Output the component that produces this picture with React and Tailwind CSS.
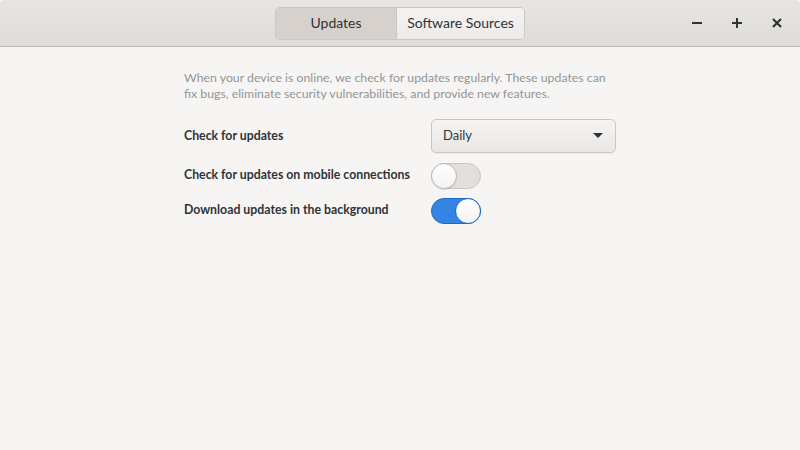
import React from "react";

export default function App() {
  const font = { fontFamily: 'Lato, "Noto Sans", sans-serif' };
  return (
    <div className="w-[800px] h-[450px] bg-white overflow-hidden" style={font}>
      <div className="w-full h-full bg-[#f6f5f4] rounded-t-[4px] overflow-hidden flex flex-col">
        <div className="h-[47px] shrink-0 bg-gradient-to-b from-[#e8e6e3] to-[#dedbd8] border-b border-[#bfb8b1] flex items-center relative">
          <div className="absolute left-[275px] top-[7px] flex h-[33px] w-[250px] rounded-[5px] border border-[#cdc7c2] overflow-hidden text-[14px] text-[#2e3436]">
            <div className="w-[121px] flex items-center justify-center pb-[2px] bg-[#d6d1cd] border-r border-[#cdc7c2]">Updates</div>
            <div className="flex-1 flex items-center justify-center pb-[2px] bg-gradient-to-b from-[#f4f3f2] to-[#edebe9]">Software Sources</div>
          </div>
          <div className="absolute right-0 top-0 h-[46px] flex items-center pb-[1px]">
            <div className="w-[40px] flex justify-center">
              <svg width="12" height="12" viewBox="0 0 12 12"><rect x="1" y="5" width="10" height="2" fill="#2e3436" /></svg>
            </div>
            <div className="w-[40px] flex justify-center">
              <svg width="12" height="12" viewBox="0 0 12 12"><rect x="1" y="5" width="10" height="2" fill="#2e3436" /><rect x="5" y="1" width="2" height="10" fill="#2e3436" /></svg>
            </div>
            <div className="w-[40px] flex justify-center mr-[3px]">
              <svg width="12" height="12" viewBox="0 0 12 12"><path d="M2 2 L10 10 M10 2 L2 10" stroke="#2e3436" strokeWidth="2.2" /></svg>
            </div>
          </div>
        </div>
        <div className="pl-[184px] pt-[23px] text-[#2e3436]">
          <p className="text-[12.3px] leading-[16px] text-[#929595] whitespace-nowrap">
            When your device is online, we check for updates regularly. These updates can
            <br />
            fix bugs, eliminate security vulnerabilities, and provide new features.
          </p>
          <div className="mt-[17px] flex items-center h-[34px]">
            <div className="w-[247px] text-[12.3px] font-bold whitespace-nowrap">Check for updates</div>
            <div className="w-[185px] h-[34px] rounded-[5px] border border-[#cdc7c2] bg-gradient-to-b from-[#f4f3f2] to-[#eae8e6] flex items-center justify-between px-[11px] text-[13px] shadow-[0_1px_0_rgba(0,0,0,0.05)]">
              <span>Daily</span>
              <svg width="12" height="8" viewBox="0 0 12 8"><path d="M1 1 L11 1 L6 6 Z" fill="#2e3436" /></svg>
            </div>
          </div>
          <div className="mt-[9px] flex items-center h-[27px]">
            <div className="w-[247px] text-[12.3px] font-bold whitespace-nowrap">Check for updates on mobile connections</div>
            <div className="w-[50px] h-[26px] rounded-full bg-[#e1dedb] border border-[#cdc7c2] flex items-center">
              <div className="w-[26px] h-[26px] -ml-px rounded-full bg-gradient-to-b from-white to-[#f4f3f2] border border-[#bfb8b1] shadow-[0_1px_1px_rgba(0,0,0,0.1)]" />
            </div>
          </div>
          <div className="mt-[8px] flex items-center h-[27px]">
            <div className="w-[247px] text-[12.3px] font-bold whitespace-nowrap">Download updates in the background</div>
            <div className="w-[50px] h-[26px] rounded-full bg-[#3584e4] border border-[#1b6acb] flex items-center justify-end">
              <div className="w-[26px] h-[26px] -mr-px rounded-full bg-gradient-to-b from-white to-[#f4f3f2] border border-[#1b6acb]" />
            </div>
          </div>
        </div>
      </div>
    </div>
  );
}
